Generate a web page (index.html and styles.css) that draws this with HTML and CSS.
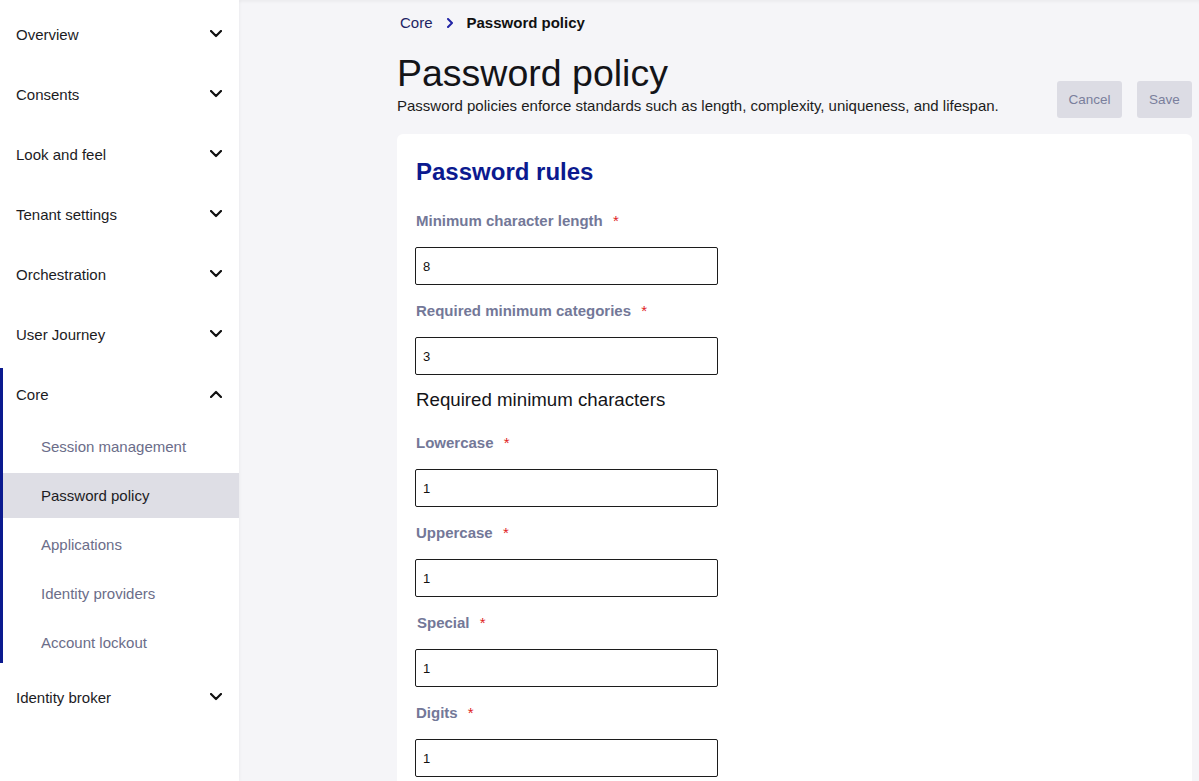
FILE: index.html
```html
<!DOCTYPE html>
<html lang="en">
<head>
<meta charset="utf-8">
<title>Password policy</title>
<link rel="stylesheet" href="styles.css">
</head>
<body>
<div class="app">
  <nav class="sidebar">
    <div class="nav-item"><span>Overview</span><svg class="chev" viewBox="0 0 12 8"><polyline points="1,1 6,6 11,1"/></svg></div>
    <div class="nav-item"><span>Consents</span><svg class="chev" viewBox="0 0 12 8"><polyline points="1,1 6,6 11,1"/></svg></div>
    <div class="nav-item"><span>Look and feel</span><svg class="chev" viewBox="0 0 12 8"><polyline points="1,1 6,6 11,1"/></svg></div>
    <div class="nav-item"><span>Tenant settings</span><svg class="chev" viewBox="0 0 12 8"><polyline points="1,1 6,6 11,1"/></svg></div>
    <div class="nav-item"><span>Orchestration</span><svg class="chev" viewBox="0 0 12 8"><polyline points="1,1 6,6 11,1"/></svg></div>
    <div class="nav-item"><span>User Journey</span><svg class="chev" viewBox="0 0 12 8"><polyline points="1,1 6,6 11,1"/></svg></div>
    <div class="nav-group">
      <div class="nav-item"><span>Core</span><svg class="chev" viewBox="0 0 12 8"><polyline points="1,7 6,2 11,7"/></svg></div>
      <div class="sub-list">
        <div class="sub-item">Session management</div>
        <div class="sub-item active">Password policy</div>
        <div class="sub-item">Applications</div>
        <div class="sub-item">Identity providers</div>
        <div class="sub-item">Account lockout</div>
      </div>
    </div>
    <div class="nav-item"><span>Identity broker</span><svg class="chev" viewBox="0 0 12 8"><polyline points="1,1 6,6 11,1"/></svg></div>
  </nav>

  <main class="main">
    <div class="breadcrumb">
      <span class="crumb-link">Core</span>
      <svg class="crumb-sep" viewBox="0 0 8 10"><polyline points="2,1 6,5 2,9"/></svg>
      <span class="crumb-current">Password policy</span>
    </div>
    <div class="page-header">
      <div class="page-titles">
        <h1 class="page-title">Password policy</h1>
        <p class="page-desc">Password policies enforce standards such as length, complexity, uniqueness, and lifespan.</p>
      </div>
      <div class="actions">
        <button class="btn btn-cancel">Cancel</button>
        <button class="btn btn-save">Save</button>
      </div>
    </div>

    <section class="card">
      <h2 class="card-title">Password rules</h2>
      <div class="field">
        <label class="field-label">Minimum character length <span class="req">*</span></label>
        <div class="input">8</div>
      </div>
      <div class="field">
        <label class="field-label">Required minimum categories <span class="req">*</span></label>
        <div class="input">3</div>
      </div>
      <h3 class="subheading">Required minimum characters</h3>
      <div class="field">
        <label class="field-label">Lowercase <span class="req">*</span></label>
        <div class="input">1</div>
      </div>
      <div class="field">
        <label class="field-label">Uppercase <span class="req">*</span></label>
        <div class="input">1</div>
      </div>
      <div class="field">
        <label class="field-label shift">Special <span class="req">*</span></label>
        <div class="input">1</div>
      </div>
      <div class="field">
        <label class="field-label">Digits <span class="req">*</span></label>
        <div class="input">1</div>
      </div>
    </section>
  </main>
</div>
</body>
</html>
```

FILE: styles.css
```css
* { box-sizing: border-box; }
html, body {
  margin: 0;
  padding: 0;
  height: 100%;
  overflow: hidden;
}
body {
  font-family: "Liberation Sans", Arial, sans-serif;
  background: #f5f5f8;
  color: #1b1b1f;
}
.app {
  display: flex;
  height: 781px;
  box-shadow: inset 0 4px 4px -3px rgba(0,0,0,0.06);
}
.sidebar {
  width: 239px;
  flex: 0 0 239px;
  background: #ffffff;
  padding-top: 4px;
  box-shadow: 1px 0 3px rgba(0,0,0,0.04);
  position: relative;
  z-index: 1;
}
.nav-item {
  height: 60px;
  display: flex;
  align-items: center;
  justify-content: space-between;
  padding: 0 17px 0 16px;
  font-size: 15px;
  color: #1c1c1f;
}
.chev {
  width: 12px;
  height: 8px;
  fill: none;
  stroke: #111;
  stroke-width: 2.2;
  stroke-linecap: round;
  stroke-linejoin: round;
}
.nav-group {
  position: relative;
  padding-bottom: 2px;
}
.nav-group::before {
  content: "";
  position: absolute;
  left: 0;
  top: 4px;
  bottom: 4px;
  width: 3px;
  background: #0b1a8f;
}
.sub-list {
  display: flex;
  flex-direction: column;
  gap: 4px;
}
.sub-item {
  height: 45px;
  display: flex;
  align-items: center;
  padding-left: 41px;
  font-size: 15px;
  color: #6b6d89;
}
.sub-item.active {
  background: #dedee5;
  color: #1c1c24;
}

.main {
  flex: 1;
  padding: 12px 7px 0 158px;
  min-width: 0;
}
.breadcrumb {
  height: 20px;
  display: flex;
  align-items: center;
  font-size: 15px;
  padding-left: 3px;
}
.crumb-link { color: #1d2463; }
.crumb-sep {
  width: 8px;
  height: 10px;
  margin: 1px 13px 0 13px;
  fill: none;
  stroke: #2225a6;
  stroke-width: 2;
  stroke-linecap: round;
  stroke-linejoin: round;
}
.crumb-current {
  font-weight: bold;
  color: #111;
}
.page-header {
  display: flex;
  justify-content: space-between;
  align-items: flex-start;
  margin-top: 19px;
}
.page-title {
  margin: 0;
  font-size: 37.5px;
  line-height: 44px;
  font-weight: normal;
  color: #141418;
}
.page-desc {
  margin: 2px 0 0;
  font-size: 15px;
  line-height: 18px;
  color: #1c1c20;
}
.actions {
  display: flex;
  gap: 15px;
  margin-top: 30px;
}
.btn {
  height: 37px;
  border: none;
  border-radius: 3px;
  background: #dcdce4;
  color: #7a7f9c;
  font-family: "Liberation Sans", Arial, sans-serif;
  font-size: 13.5px;
  padding: 0;
}
.btn-cancel { width: 65px; }
.btn-save { width: 55px; }

.card {
  margin-top: 16px;
  background: #ffffff;
  border-radius: 6px;
  padding: 23px 19px 40px;
  min-height: 700px;
}
.card-title {
  margin: 0 0 24px;
  font-size: 24px;
  line-height: 30px;
  font-weight: bold;
  color: #0b1a8f;
}
.field {
  display: flex;
  flex-direction: column;
  gap: 16px;
  margin-bottom: 16px;
}
.field-label {
  font-size: 15px;
  line-height: 20px;
  font-weight: bold;
  color: #737898;
}
.field-label.shift { padding-left: 1px; }
.req {
  color: #e0221e;
  font-weight: normal;
  margin-left: 6px;
}
.input {
  width: 303px;
  height: 38px;
  margin-left: -1px;
  border: 1px solid #1c1c1c;
  border-radius: 2px;
  padding: 0 7px;
  display: flex;
  align-items: center;
  font-size: 13px;
  color: #111;
}
.subheading {
  margin: -3px 0 21px;
  font-size: 18.7px;
  line-height: 24px;
  font-weight: normal;
  color: #141418;
}
```
